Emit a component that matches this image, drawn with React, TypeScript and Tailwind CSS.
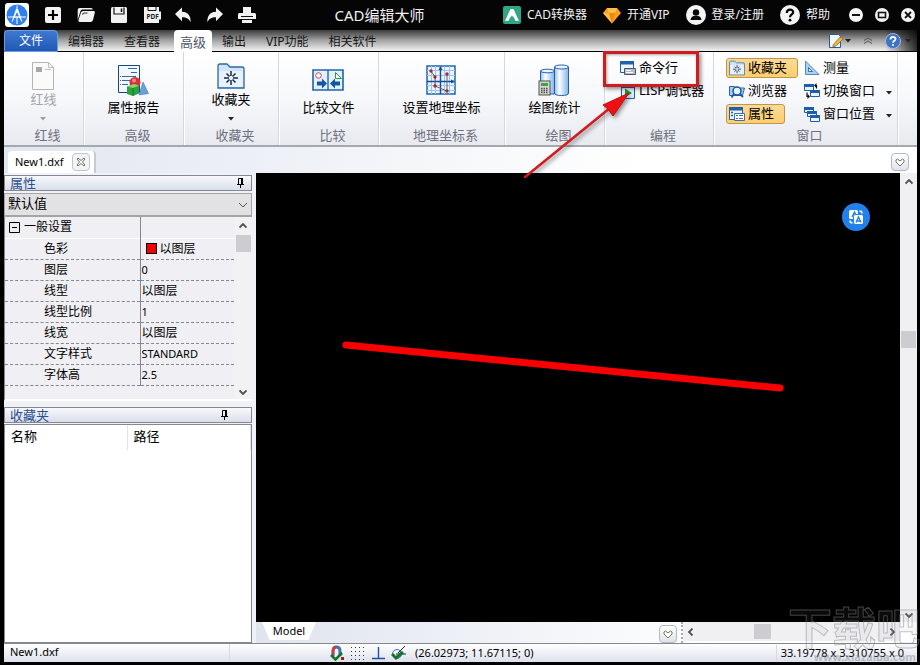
import type { ReactNode } from "react";
import clsx from "clsx";

interface PropertyRow {
  name: string;
  value: string;
  swatch?: boolean;
}

const properties: PropertyRow[] = [
  { name: "色彩", value: "以图层", swatch: true },
  { name: "图层", value: "0" },
  { name: "线型", value: "以图层" },
  { name: "线型比例", value: "1" },
  { name: "线宽", value: "以图层" },
  { name: "文字样式", value: "STANDARD" },
  { name: "字体高", value: "2.5" },
];

const tabs = ["编辑器", "查看器", "高级", "输出", "VIP功能", "相关软件"];

/* ---------- title bar icons ---------- */

function LogoIcon() {
  return (
    <svg width="24" height="24" viewBox="0 0 24 24">
      <rect width="24" height="24" rx="3" fill="#fff" />
      <circle cx="12" cy="12" r="10.5" fill="#2f80ec" />
      <path d="M12 2.5v4M12 14v7M3 14h5M16 14h5" stroke="#fff" strokeWidth="1" />
      <path d="M11 6h2l4.5 13-1.3-.8L12 9l-4.2 9.2-1.3.8z" fill="#fff" />
      <path d="M8 14h8" stroke="#fff" strokeWidth="1.4" />
    </svg>
  );
}

function NewIcon() {
  return (
    <svg width="18" height="18" viewBox="0 0 18 18">
      <rect x="1" y="1" width="16" height="16" rx="2" fill="#f2f2f2" />
      <path d="M9 4v10M4 9h10" stroke="#000" strokeWidth="2.2" />
    </svg>
  );
}

function OpenIcon() {
  return (
    <svg width="18" height="18" viewBox="0 0 18 18">
      <path d="M.7 14V4Q.7 2 2.700 2H14q1.800 0 2 1.500H5.500Q4 3.500 3.500 5z" fill="#f2f2f2" />
      <path d="M6 5h10.500Q18.200 5 17.800 6.700L16 14q-.5 2-2.500 2H3Q1 16 1.500 14L4 6.500Q4.500 5 6 5z" fill="#f2f2f2" />
      <path d="M5.500 8.500Q6 7 7.500 7h3" fill="none" stroke="#333" strokeWidth="1.200" />
    </svg>
  );
}

function SaveIcon() {
  return (
    <svg width="18" height="18" viewBox="0 0 18 18">
      <path d="M1 2.500Q1 1 2.500 1h13Q17 1 17 2.500v13Q17 17 15.500 17h-13Q1 17 1 15.500z" fill="#f2f2f2" />
      <path d="M4 1.500V8h10V1.500" fill="none" stroke="#111" strokeWidth="1.200" />
      <path d="M11.500 2.500v3.500" stroke="#111" strokeWidth="1.500" />
    </svg>
  );
}

function PdfIcon() {
  return (
    <svg width="18" height="18" viewBox="0 0 18 18">
      <path d="M1 1h15v4.500h2v8h-2V17H1z" fill="#f2f2f2" />
      <path d="M5 1v3.500h8V1" fill="none" stroke="#111" />
      <text x="3.500" y="12.500" fontSize="6.500" fontWeight="700" fill="#222">PDF</text>
    </svg>
  );
}

function UndoIcon({ flip = false }: { flip?: boolean }) {
  return (
    <svg width="18" height="18" viewBox="0 0 18 18" className={clsx(flip && "-scale-x-100")}>
      <path d="M8 1.500v4.200c6 .3 9 4 8.600 10.500-1.600-3.600-4-5-8.600-5v4L1 8z" fill="#f2f2f2" />
    </svg>
  );
}

function PrintIcon() {
  return (
    <svg width="18" height="18" viewBox="0 0 18 18">
      <path d="M5 1h8v6H5zM0 8.500Q0 7 1.500 7h15Q18 7 18 8.500V13H0zM4 13.500h10V17H4z" fill="#f2f2f2" />
      <path d="M3 10.500h12M4 13.500h10" stroke="#111" strokeWidth="1.200" />
    </svg>
  );
}

function ConverterIcon() {
  return (
    <svg width="18" height="18" viewBox="0 0 18 18">
      <rect width="18" height="18" rx="2" fill="#2fa785" />
      <path d="M7.500 3h3L16 15h-3.500L9 7.500 5.500 15H2z" fill="#fff" />
      <path d="M6 11l3-2.500 4 3.500" fill="none" stroke="#fff" strokeWidth="1.800" />
    </svg>
  );
}

function GemIcon() {
  return (
    <svg width="18" height="17" viewBox="0 0 18 17">
      <path d="M4 1h10l4 5-9 10.500L0 6z" fill="#ff9d1c" />
      <path d="M4 1h10l-2 5H6zM0 6h6l3 10.500z" fill="#ffbd4a" />
      <path d="M6 6h6L9 16.500z" fill="#f08a0a" />
    </svg>
  );
}

function UserIcon() {
  return (
    <svg width="20" height="20" viewBox="0 0 20 20">
      <circle cx="10" cy="10" r="10" fill="#f4f4f4" />
      <circle cx="10" cy="7.500" r="3.200" fill="#0a0a0a" />
      <path d="M4.500 15c.3-2.800 2-4 3.500-4h4c1.500 0 3.200 1.200 3.500 4z" fill="#0a0a0a" />
    </svg>
  );
}

function HelpIcon() {
  return (
    <svg width="20" height="20" viewBox="0 0 20 20">
      <circle cx="10" cy="10" r="10" fill="#f4f4f4" />
      <path d="M6.800 8c0-4.400 6.600-4.200 6.400-.6C13 9.500 10 9.600 10 12.300" fill="none" stroke="#0a0a0a" strokeWidth="2.200" />
      <circle cx="10" cy="15.200" r="1.400" fill="#0a0a0a" />
    </svg>
  );
}

function WindowGlyph({ kind }: { kind: "min" | "max" | "close" }) {
  return (
    <svg width="14" height="14" viewBox="0 0 14 14">
      <circle cx="7" cy="7" r="7" fill="#f4f4f4" />
      {kind === "min" && <path d="M3 7h8" stroke="#111" strokeWidth="2" />}
      {kind === "max" && <rect x="3.500" y="4.500" width="7" height="5" fill="none" stroke="#111" strokeWidth="1.600" />}
      {kind === "close" && <path d="M4 4l6 6M10 4l-6 6" stroke="#111" strokeWidth="1.800" />}
    </svg>
  );
}

/* ---------- ribbon icons ---------- */

function RedlineIcon() {
  return (
    <svg width="24" height="30" viewBox="0 0 24 30">
      <path d="M1.500 1.500h16l5 5v22h-21z" fill="#fafafa" stroke="#b4b4b4" />
      <path d="M17.500 1.500v5h5M14 8.500h6" fill="none" stroke="#bdbdbd" />
      <rect x="5" y="6" width="6" height="5" fill="#a6a6a6" />
    </svg>
  );
}

function ReportIcon() {
  return (
    <svg width="32" height="32" viewBox="0 0 32 32">
      <path d="M1.500 1.500h21v27h-21z" fill="#f2f8ff" stroke="#15477f" />
      <path d="M11 4.500h9M14 8.500h6M5 12.500h14M5 16.500h8M5 20.500h6" stroke="#35699f" />
      <path d="M3 12.500h1M3 16.500h1M3 20.500h1" stroke="#c23" />
      <circle cx="18" cy="18.500" r="5.500" fill="#dd2f36" />
      <circle cx="17" cy="16.500" r="2" fill="#ff8a85" />
      <path d="M26 18l5.500 11.500L22 31z" fill="#6c9ede" stroke="#3768b0" strokeWidth=".5" />
      <path d="M10 22.500l7-2.500 5 1.500v8l-6 2.500-6-2z" fill="#2ea33d" />
      <path d="M10 22.500l7-2.500 5 1.500-6 2.500z" fill="#83d56d" />
      <path d="M16 24v8" stroke="#14752a" />
    </svg>
  );
}

function FolderIcon({ size = 28 }: { size?: number }) {
  return (
    <svg width={size} height={size} viewBox="0 0 28 26">
      <path d="M1 25V3q0-2 2-2h7l3 3h12q2 0 2 2v19z" fill="#cfe3fa" stroke="#2867ab" strokeWidth="1.300" />
      <path d="M2 8h24v16H2z" fill="#e6f2ff" />
      <path d="M14 8v5M14 17v5M7 15h5M16 15h5M9.500 10.500l3 3M18.500 10.500l-3 3M9.500 19.500l3-3M18.500 19.500l-3-3" stroke="#1d2b45" strokeWidth="1.500" />
    </svg>
  );
}

function CompareIcon() {
  return (
    <svg width="32" height="22" viewBox="0 0 32 22">
      <path d="M1 1h30v20H1z" fill="#e4f0fc" stroke="#1e65ad" strokeWidth="1.600" />
      <path d="M16 1v20" stroke="#1e65ad" strokeWidth="1.400" />
      <circle cx="6.500" cy="6.500" r="2.800" fill="#fff" stroke="#d9404b" />
      <path d="M23.500 3.500v6h6z" fill="#fff" stroke="#2e9a3e" />
      <path d="M5 12.500h5V9.500l5 5-5 5v-3H5zM28 12.500h-5V9.500l-5 5 5 5v-3h5z" fill="#1455a6" />
    </svg>
  );
}

function GeoIcon() {
  return (
    <svg width="30" height="30" viewBox="0 0 30 30">
      <rect x="1" y="1" width="28" height="28" fill="#eaf4ff" stroke="#1e65ad" strokeWidth="1.500" />
      <path d="M5.500 1v28M9.500 1v28M18.500 1v28M23.500 1v28M1 5.500h28M1 10.500h28M1 20.500h28M1 25.500h28" stroke="#9cc4ec" />
      <path d="M14.500 2v27M1 16.500h27" stroke="#164c95" strokeWidth="1.400" />
      <path d="M12.500 5l2-4 2 4zM25 14.500l4 2-4 2z" fill="#164c95" />
      <path d="M5 6l4 6v9l12 5V9" fill="none" stroke="#666" />
      <g fill="#b3202c">
        <circle cx="5" cy="6" r="1.700" />
        <circle cx="9" cy="12" r="1.700" />
        <circle cx="9" cy="21" r="1.700" />
        <circle cx="21" cy="26" r="1.700" />
        <circle cx="21" cy="9" r="1.700" />
      </g>
    </svg>
  );
}

function StatsIcon() {
  return (
    <svg width="32" height="32" viewBox="0 0 32 32">
      <defs>
        <linearGradient id="cylinder">
          <stop offset="0" stopColor="#8fbff0" />
          <stop offset=".35" stopColor="#fff" />
          <stop offset="1" stopColor="#7fb4ee" />
        </linearGradient>
      </defs>
      <path d="M2.500 7v23h14V7z" fill="url(#cylinder)" stroke="#285da5" />
      <ellipse cx="9.500" cy="7" rx="7" ry="1.800" fill="#eaf5ff" stroke="#285da5" />
      <path d="M16.500 3v26q0 2.500 7 2.500t7-2.500V3z" fill="url(#cylinder)" stroke="#285da5" />
      <ellipse cx="23.500" cy="3" rx="7" ry="2" fill="#e8f4ff" stroke="#285da5" />
      <rect x="1" y="17" width="11" height="14" fill="#d8d8cf" stroke="#4c514b" />
      <rect x="3" y="19" width="7" height="3" fill="#36a947" />
      <path d="M3 24.500h7M3 26.500h7M3 28.500h7" stroke="#4f4f4f" strokeWidth="1.300" strokeDasharray="1.500 1" />
    </svg>
  );
}

function CommandIcon() {
  return (
    <svg width="16" height="16" viewBox="0 0 16 16">
      <path d="M.500 1.500h13v11H.500z" fill="#eef6ff" stroke="#2260a8" />
      <path d="M0 1h14v3.500H0z" fill="#2260a8" />
      <path d="M4.500 8.500h11v6h-11z" fill="#b3bbc8" stroke="#4a566c" />
      <path d="M6 10.500h5M6 12.500h7" stroke="#fff" />
    </svg>
  );
}

function LispIcon() {
  return (
    <svg width="16" height="16" viewBox="0 0 16 16">
      <path d="M1.500 3.500h13v12h-13z" fill="#e4f1ff" stroke="#2260a8" />
      <path d="M1 1h14v4H1z" fill="#2260a8" />
      <path d="M3 3.500h10" stroke="#fff" strokeDasharray="2 1" />
      <path d="M5 5.500l7 4.500-7 4.500z" fill="#1a9a35" />
    </svg>
  );
}

function BrowserIcon() {
  return (
    <svg width="16" height="16" viewBox="0 0 16 16">
      <path d="M.500 12.500V3.500h5l1 1.500h9l-2 7.500z" fill="#a9cdf4" stroke="#2766ad" />
      <circle cx="8" cy="8" r="4" fill="#e5f3ff" stroke="#1b559c" strokeWidth="1.500" />
      <path d="M5 11l-2.500 3.500M11 11l3 3" stroke="#1b559c" strokeWidth="1.800" />
    </svg>
  );
}

function PropsIcon() {
  return (
    <svg width="16" height="16" viewBox="0 0 16 16">
      <path d="M.500 1.500h13v12H.500z" fill="#e9f4ff" stroke="#2260a8" />
      <path d="M0 1h14v3.500H0z" fill="#2260a8" />
      <path d="M2 6.500h2M2 9.500h2" stroke="#2260a8" strokeWidth="1.500" />
      <path d="M5.500 7.500h10v7h-10z" fill="#fff" stroke="#3d70b3" />
      <path d="M7 9.500h2M7 12.500h2M10 9.500h4M10 12.500h4" stroke="#3d70b3" />
    </svg>
  );
}

function MeasureIcon() {
  return (
    <svg width="16" height="16" viewBox="0 0 16 16">
      <path d="M1.500 1v13.500h13.500z" fill="#a9d0f5" stroke="#5b87b8" />
      <path d="M4.500 7.500v4h4z" fill="#fff" stroke="#3c6ea8" />
    </svg>
  );
}

function SwitchIcon() {
  return (
    <svg width="16" height="16" viewBox="0 0 16 16">
      <path d="M.500 1.500h9v6h-9zM6.500 7.500h9v6h-9z" fill="#e7f3ff" stroke="#1d5daa" />
      <path d="M0 1h10v3H0zM6 7h10v3H6z" fill="#1d5daa" />
      <path d="M12.500 5.500V2.500h-1M3 9.500v4h1" fill="none" stroke="#111" strokeWidth="1.200" />
      <path d="M12.500 0v5L10 2.500zM3.500 11v5L6 13.500z" fill="#111" />
    </svg>
  );
}

function CascadeIcon() {
  return (
    <svg width="16" height="16" viewBox="0 0 16 16">
      <path d="M.500 1.500h9v5h-9zM3.500 5.500h9v5h-9zM6.500 9.500h9v6h-9z" fill="#e7f3ff" stroke="#1d5daa" />
      <path d="M0 1h10v3H0zM3 5h10v3H3zM6 9h10v3H6z" fill="#1d5daa" />
    </svg>
  );
}

function Caret({ muted = false }: { muted?: boolean }) {
  return (
    <svg width="6" height="4" viewBox="0 0 6 4">
      <path d="M0 0h6L3 3.500z" fill={muted ? "#a0a0a0" : "#222"} />
    </svg>
  );
}

function PinIcon() {
  return (
    <svg width="9" height="10" viewBox="0 0 9 10">
      <path d="M2.500 6V.500h4V6M1 6.500h7M4.500 7v3" fill="none" stroke="#000" />
      <path d="M6 0v6" stroke="#000" strokeWidth="2" />
    </svg>
  );
}

function Chevron({ className }: { className?: string }) {
  return (
    <svg width="8" height="6" viewBox="0 0 8 6" className={className}>
      <path d="M.500 4.500L4 1l3.500 3.500" fill="none" stroke="#505050" strokeWidth="1.800" />
    </svg>
  );
}

function HeartButton({ label }: { label: string }) {
  return (
    <button type="button" aria-label={label} className="flex size-[18px] shrink-0 items-center justify-center rounded-sm border border-[#b3b8c4] bg-linear-to-b from-white to-[#dfe3ea]">
      <svg width="10" height="9" viewBox="0 0 10 9">
        <path d="M5 8L1 4V2l1.500-1L5 3l2.500-2L9 2v2z" fill="#fff" stroke="#77735d" />
      </svg>
    </button>
  );
}

/* ---------- building blocks ---------- */

function TitleLink({ icon, children }: { icon: ReactNode; children: ReactNode }) {
  return (
    <button type="button" className="flex items-center gap-1.5 whitespace-nowrap">
      {icon}
      {children}
    </button>
  );
}

function RibbonGroup({ label, className, start = false, children }: { label: string; className: string; start?: boolean; children: ReactNode }) {
  return (
    <section className={clsx("flex shrink-0 flex-col border-r border-[#d3d7df] shadow-[1px_0_0_#fff]", className)}>
      <div className={clsx("flex flex-1", start ? "pl-3" : "justify-center")}>{children}</div>
      <h2 className="h-[18px] pl-2 text-center text-[13px] leading-4 text-[#6c717d]">{label}</h2>
    </section>
  );
}

function BigButton({ icon, label, menu = false, disabled = false }: { icon: ReactNode; label: string; menu?: boolean; disabled?: boolean }) {
  return (
    <button type="button" disabled={disabled} className={clsx("flex flex-col items-center self-start", disabled ? "text-[#a3a3a3]" : "text-black")}>
      <span className={clsx("flex items-center justify-center pt-2", menu ? "h-[39px]" : "h-[47px]")}>{icon}</span>
      <span className="text-[13px] leading-4">{label}</span>
      {menu && <span className="pt-2.5"><Caret muted={disabled} /></span>}
    </button>
  );
}

function SmallButton({ icon, label, active = false, menu = false }: { icon: ReactNode; label: string; active?: boolean; menu?: boolean }) {
  return (
    <button
      type="button"
      className={clsx(
        "flex h-5 items-center gap-[3px] rounded-[3px] border pr-2.5 pl-0.5 text-[13px] leading-4 whitespace-nowrap text-black",
        active ? "border-[#c2954a] bg-linear-to-b from-[#fbd997] to-[#ffce6d]" : "border-transparent",
      )}
    >
      {icon}
      <span className="pb-0.5">{label}</span>
      {menu && <span className="pt-1 pl-2"><Caret /></span>}
    </button>
  );
}

function PanelTitle({ title, className }: { title: string; className?: string }) {
  return (
    <div className={clsx("flex h-4 items-center justify-between border border-[#85888f] bg-linear-to-b from-[#f8f9fc] to-[#d9deea] pl-[5px]", className)}>
      <h2 className="text-[13px] leading-none text-[#2a4f8f]">{title}</h2>
      <button type="button" aria-label={`固定${title}`}><PinIcon /></button>
    </div>
  );
}

function TitleBar() {
  return (
    <header className="flex h-[30px] shrink-0 items-center bg-[#050506] pr-[5px] pl-[5px] text-xs leading-4 text-[#f0f0f0]">
      <LogoIcon />
      <div className="ml-[15px] flex items-center gap-[15px]">
        <button type="button" aria-label="新建"><NewIcon /></button>
        <button type="button" aria-label="打开"><OpenIcon /></button>
        <button type="button" aria-label="保存"><SaveIcon /></button>
        <button type="button" aria-label="导出"><PdfIcon /></button>
      </div>
      <div className="ml-[13px] flex items-center gap-[14px]">
        <button type="button" aria-label="撤销"><UndoIcon /></button>
        <button type="button" aria-label="重做"><UndoIcon flip /></button>
        <button type="button" aria-label="打印"><PrintIcon /></button>
      </div>
      <h1 className="flex-1 text-center text-[15px]">CAD编辑大师</h1>
      <div className="flex items-center gap-4">
        <TitleLink icon={<ConverterIcon />}>CAD转换器</TitleLink>
        <TitleLink icon={<GemIcon />}>开通VIP</TitleLink>
        <TitleLink icon={<UserIcon />}>登录/注册</TitleLink>
        <TitleLink icon={<HelpIcon />}>帮助</TitleLink>
      </div>
      <div className="ml-[19px] flex gap-3">
        <button type="button" aria-label="最小化"><WindowGlyph kind="min" /></button>
        <button type="button" aria-label="最大化"><WindowGlyph kind="max" /></button>
        <button type="button" aria-label="关闭"><WindowGlyph kind="close" /></button>
      </div>
    </header>
  );
}

function RibbonTabs() {
  return (
    <nav className="flex h-[22px] shrink-0 items-stretch border-b border-black bg-linear-to-b from-[#3d3d3d] via-[#a5a5a5] to-[#f2f2f2] text-xs leading-4 text-[#161616]">
      <button type="button" className="-mb-px w-[54px] rounded-t-sm border border-[#6d9ce0] bg-linear-to-b from-[#3f78cf] to-[#2059b5] text-white">文件</button>
      {tabs.map((tab) => (
        <button
          key={tab}
          type="button"
          className={clsx(
            "pt-0.5 whitespace-nowrap",
            tab === "高级" ? "-mb-px ml-1 rounded-t-sm bg-white px-1.5 text-[13px] text-[#4e5668]" : "px-2.5",
          )}
        >
          {tab}
        </button>
      ))}
      <div className="ml-auto flex items-stretch">
        <button type="button" aria-label="样式" className="flex items-center gap-px">
          <svg width="16" height="16" viewBox="0 0 16 16">
            <path d="M1.500 1.500h9l2 2v11h-11z" fill="#f3f8ff" stroke="#2d5890" />
            <path d="M5 12l7-8 3 2-7 7-3 1z" fill="#eab743" stroke="#8c661d" strokeWidth=".7" />
          </svg>
          <Caret />
        </button>
        <button type="button" aria-label="折叠功能区" className="px-3">
          <svg width="10" height="7" viewBox="0 0 10 7">
            <path d="M1 3.500L5 1l4 2.500M1 6.500L5 4l4 2.500" fill="none" stroke="#555" />
          </svg>
        </button>
        <button type="button" aria-label="帮助主题" className="flex items-center gap-1 bg-linear-to-r from-transparent to-black/80 pr-1.5">
          <svg width="16" height="16" viewBox="0 0 16 16">
            <circle cx="8" cy="8" r="7.500" fill="#3d72c4" stroke="#9db9e5" />
            <path d="M5.500 6.500c0-3.400 5-3.200 5-.4 0 1.700-2.500 1.600-2.500 3.700" fill="none" stroke="#fff" strokeWidth="1.800" />
            <circle cx="8" cy="12" r="1.100" fill="#fff" />
          </svg>
          <Caret />
        </button>
      </div>
    </nav>
  );
}

function Ribbon() {
  return (
    <div className="relative z-10 flex h-[95px] shrink-0 border-b-2 border-[#a5a8ae] bg-linear-to-b from-white via-[#f7f8fb] to-[#e8eaf0]">
      <RibbonGroup label="红线" className="w-20">
        <BigButton icon={<RedlineIcon />} label="红线" menu disabled />
      </RibbonGroup>
      <RibbonGroup label="高级" className="w-[100px]">
        <BigButton icon={<ReportIcon />} label="属性报告" />
      </RibbonGroup>
      <RibbonGroup label="收藏夹" className="w-[95px]">
        <BigButton icon={<FolderIcon />} label="收藏夹" menu />
      </RibbonGroup>
      <RibbonGroup label="比较" className="w-[100px]">
        <BigButton icon={<CompareIcon />} label="比较文件" />
      </RibbonGroup>
      <RibbonGroup label="地理坐标系" className="w-[126px]">
        <BigButton icon={<GeoIcon />} label="设置地理坐标" />
      </RibbonGroup>
      <RibbonGroup label="绘图" className="w-[100px]">
        <BigButton icon={<StatsIcon />} label="绘图统计" />
      </RibbonGroup>
      <RibbonGroup label="编程" className="w-[109px]" start>
        <div className="relative flex flex-col items-start gap-[3px] pt-1.5">
          <SmallButton icon={<CommandIcon />} label="命令行" />
          <SmallButton icon={<LispIcon />} label="LISP调试器" />
          {/* callout around the command line button, with its arrow */}
          <div className="pointer-events-none absolute -top-px left-[-14px] h-9 w-24 border-[3px] border-[#cf1d1f] shadow-[2px_2px_4px_rgba(0,0,0,0.45),inset_1px_1px_3px_rgba(0,0,0,0.35)]" />
          <svg width="112" height="96" viewBox="0 0 112 96" className="pointer-events-none absolute top-[34px] left-[-95px] drop-shadow-[2px_2px_2px_rgba(0,0,0,0.45)]">
            <path d="M3 91L88 22" stroke="#cf1d1f" strokeWidth="2.500" strokeLinecap="round" />
            <path d="M107 7L81 19l5 4 5 7z" fill="#f01012" stroke="#b81113" />
          </svg>
        </div>
      </RibbonGroup>
      <RibbonGroup label="窗口" className="w-[184px]" start>
        <div className="grid grid-cols-[auto_auto] content-start justify-items-start gap-x-[3px] gap-y-[3px] pt-1.5">
          <SmallButton icon={<FolderIcon size={16} />} label="收藏夹" active />
          <SmallButton icon={<MeasureIcon />} label="测量" />
          <SmallButton icon={<BrowserIcon />} label="浏览器" />
          <SmallButton icon={<SwitchIcon />} label="切换窗口" menu />
          <SmallButton icon={<PropsIcon />} label="属性" active />
          <SmallButton icon={<CascadeIcon />} label="窗口位置" menu />
        </div>
      </RibbonGroup>
    </div>
  );
}

function DocumentTabs() {
  return (
    <div className="flex h-[26px] shrink-0 items-end justify-between bg-linear-to-r from-[#e1e6f0] to-white to-70% pr-2 pl-1">
      <div className="flex h-[22px] items-center gap-2 rounded-t-sm border-r-2 border-[#c4c9d3] bg-white pr-1 pl-[7px]">
        <span className="text-[11px] leading-4">New1.dxf</span>
        <button type="button" aria-label="关闭 New1.dxf" className="flex size-[18px] items-center justify-center rounded-sm border border-[#c0c4cd] bg-[#f3f4f7]">
          <svg width="10" height="10" viewBox="0 0 10 10">
            <path d="M1 2l1-1 3 2.500L8 1l1 1-2.500 3L9 8 8 9 5 6.500 2 9 1 8l2.500-3z" fill="#fff" stroke="#77735d" />
          </svg>
        </button>
      </div>
      <div className="pb-0.5"><HeartButton label="标签列表" /></div>
    </div>
  );
}

function PropertiesPanel() {
  return (
    <section>
      <PanelTitle title="属性" className="pr-1.5" />
      <div className="relative mt-0.5">
        <select aria-label="属性集" defaultValue="默认值" className="block h-6 w-full appearance-none border border-b-2 border-[#a4a4a6] bg-[#e2e1e3] pb-1 pl-[3px] text-[13px] leading-4">
          <option>默认值</option>
        </select>
        <svg width="10" height="6" viewBox="0 0 10 6" className="pointer-events-none absolute top-[9px] right-1">
          <path d="M1 1l4 4 4-4" fill="none" stroke="#555" />
        </svg>
      </div>
      <div className="flex h-[184px] border-b-2 border-l border-b-white border-l-[#85888f] bg-[#f0eff3]">
        <div className="flex-1">
          <table className="w-full table-fixed border-collapse text-xs leading-4">
            <tbody>
              <tr className="h-[21px] border-b border-white">
                <th className="w-[135px] border-r border-[#85888f] pl-1 text-left font-normal">
                  <span className="flex items-center gap-1">
                    <svg width="11" height="11" viewBox="0 0 11 11">
                      <path d="M.500.500h10v10H.500zM3 5.500h5" fill="none" stroke="#000" />
                    </svg>
                    一般设置
                  </span>
                </th>
                <td />
              </tr>
              {properties.map((row) => (
                <tr key={row.name} className="h-[21px] border-b border-dashed border-[#85888f]">
                  <th className="border-r border-[#85888f] pl-[39px] text-left font-normal [border-right-style:solid]">{row.name}</th>
                  <td className={clsx("pl-px", /^[\w.]+$/.test(row.value) && "text-[11px]")}>
                    <span className="flex items-center gap-[3px]">
                      {row.swatch && <span className="ml-1 size-[11px] border border-black bg-[#f00000]" />}
                      {row.value}
                    </span>
                  </td>
                </tr>
              ))}
            </tbody>
          </table>
        </div>
        <div className="flex w-[18px] flex-col items-center bg-[#f2f1f4]">
          <Chevron className="my-1.5" />
          <div className="h-[17px] w-[15px] bg-[#cdccd0]" />
          <Chevron className="mt-auto mb-1 rotate-180" />
        </div>
      </div>
    </section>
  );
}

function FavoritesPanel() {
  return (
    <section className="mt-1.5 flex min-h-0 flex-1 flex-col">
      <PanelTitle title="收藏夹" className="pr-[22px]" />
      <div className="mt-px flex-1 border border-[#85888f] bg-white">
        <table className="w-full table-fixed text-[13px] leading-4">
          <thead>
            <tr className="h-[25px]">
              <th className="w-[122px] border-r border-[#e3e3e5] pb-1 pl-1.5 text-left font-normal">名称</th>
              <th className="border-r border-[#e3e3e5] pb-1 pl-1.5 text-left font-normal">路径</th>
            </tr>
          </thead>
        </table>
      </div>
    </section>
  );
}

function Drawing() {
  return (
    <div className="relative flex-1 overflow-hidden bg-black">
      <svg className="block size-full">
        <path d="M90 172L524 215" stroke="#f80000" strokeWidth="7" strokeLinecap="round" />
      </svg>
      <button type="button" aria-label="翻译" className="absolute top-[30px] right-[30px] flex size-7 items-center justify-center rounded-full bg-[#2180ea]">
        <svg width="14" height="14" viewBox="0 0 14 14">
          <rect width="9" height="9" rx="1.500" fill="#fff" />
          <path d="M3 7l2.500-5L7 5" fill="none" stroke="#2180ea" strokeWidth="1.400" />
          <rect x="4.500" y="4.500" width="10" height="10" rx="2" fill="#fff" stroke="#2180ea" />
          <path d="M7 12.500L9.500 7l2.500 5.500M8 11h3" fill="none" stroke="#2180ea" strokeWidth="1.400" />
          <path d="M10.500 1q2.500 0 2.500 2.500M1 10.500Q1 13 3.500 13" fill="none" stroke="#fff" strokeWidth="1.500" />
        </svg>
      </button>
    </div>
  );
}

function StatusBar() {
  return (
    <footer className="flex h-[19px] shrink-0 items-center border-t border-[#85888f] bg-linear-to-b from-white to-[#dde1ec] text-[11px] leading-4">
      <span className="h-full w-[226px] border-r border-[#d5d9e3] pl-1.5">New1.dxf</span>
      <div className="ml-[100px] flex items-center gap-1.5">
        <svg width="15" height="16" viewBox="0 0 15 16">
          <path d="M3 11V6q0-4 3.500-4T10 6v5" fill="none" stroke="#4571b5" strokeWidth="3" />
          <path d="M3 10V6q0-4 3.500-4" fill="none" stroke="#cc4038" strokeWidth="2.500" />
          <path d="M1 10l4.500 4.500L12 8" fill="none" stroke="#12752b" strokeWidth="2.500" />
          <rect x="11" y="12" width="3" height="3" fill="#a31c23" />
        </svg>
        <svg width="15" height="15" viewBox="0 0 15 15" shapeRendering="crispEdges">
          <path d="M0 1.500h15M0 5.500h15M0 9.500h15M0 13.500h15" stroke="#333" strokeDasharray="1 3" />
        </svg>
        <svg width="13" height="14" viewBox="0 0 13 14">
          <path d="M6.500 1v11M0 12.500h13" stroke="#2552a0" strokeWidth="1.400" />
        </svg>
        <svg width="16" height="16" viewBox="0 0 16 16">
          <circle cx="6" cy="9" r="4.500" fill="none" stroke="#4571b5" />
          <path d="M5 9h10M7 8l7-7" stroke="#222" />
          <path d="M1 9l4 4 7-6" fill="none" stroke="#12752b" strokeWidth="3" />
        </svg>
        <output className="ml-0.5">(26.02973; 11.67115; 0)</output>
      </div>
      <span className="ml-auto border-l border-[#d5d9e3] pr-[13px] pl-1">33.19778 x 3.310755 x 0</span>
    </footer>
  );
}

function Workspace() {
  return (
    <main className="flex min-w-0 flex-1 flex-col">
      <div className="flex min-h-0 flex-1">
        <Drawing />
        <div className="flex w-[17px] shrink-0 flex-col items-center bg-[#f0eff2]">
          <Chevron className="mt-1.5" />
          <div className="mt-[146px] h-[17px] w-[15px] bg-[#cdccd0]" />
          <Chevron className="mt-auto mb-1 rotate-180" />
        </div>
      </div>
      <div className="flex h-[21px] shrink-0 items-start bg-linear-to-r from-[#dfe4ee] to-white to-70%">
        <button type="button" className="ml-1.5 h-[18px] w-[54px] bg-white text-[11px] leading-4 [clip-path:polygon(0_0,100%_0,86%_100%,14%_100%)]">Model</button>
        <div className="ml-auto self-end"><HeartButton label="布局列表" /></div>
        <div className="ml-1 h-full border-l-2 border-dotted border-[#a7aab6]" />
        <div className="flex h-[19px] w-[217px] items-center bg-[#f0eff2] px-1">
          <Chevron className="-rotate-90" />
          <div className="ml-[59px] h-[15px] w-[17px] bg-[#cdccd0]" />
          <Chevron className="ml-auto rotate-90" />
        </div>
        <div className="w-[17px]" />
      </div>
    </main>
  );
}

export default function App() {
  return (
    <div className="relative flex h-screen min-h-[480px] flex-col overflow-hidden bg-black pb-[3px] font-['Noto_Sans','Noto_Sans_CJK_SC',sans-serif] text-black">
      <TitleBar />
      <div className="flex min-h-0 flex-1 flex-col pr-[3px] pl-1">
        <RibbonTabs />
        <Ribbon />
        <DocumentTabs />
        <div className="flex min-h-0 flex-1 bg-[#f1f2f7]">
          <aside className="mr-1 flex w-[248px] shrink-0 flex-col pt-0.5">
            <PropertiesPanel />
            <FavoritesPanel />
          </aside>
          <Workspace />
        </div>
        <StatusBar />
      </div>
      {/* site watermark over the lower right corner */}
      <div aria-hidden="true" className="pointer-events-none absolute right-0 bottom-0 w-[134px] text-right">
        <p className="text-[44px] leading-[42px] font-bold text-[#9a9aa0]/15 opacity-50 [-webkit-text-stroke:1px_#85858a]">下载吧</p>
        <p className="pr-1 text-[11px] leading-4 font-bold text-[#8b8b90]/50">www.xiazaiba.com</p>
      </div>
    </div>
  );
}
